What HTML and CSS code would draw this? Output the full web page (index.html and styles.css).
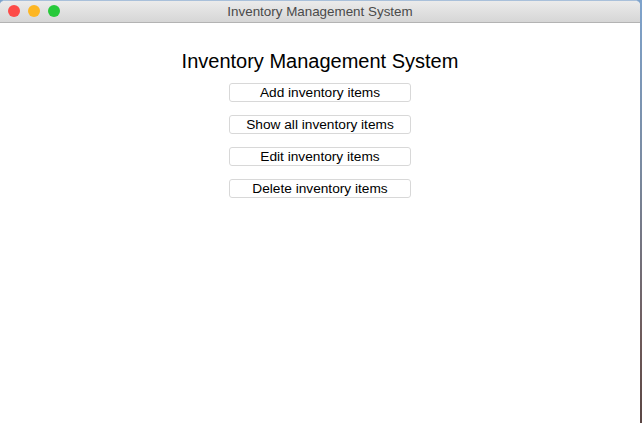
FILE: index.html
```html
<!DOCTYPE html>
<html>
<head>
<meta charset="utf-8">
<link rel="stylesheet" href="styles.css">
</head>
<body>
<div class="desktop">
  <div class="window">
    <div class="titlebar">
      <div class="lights">
        <span class="light red"></span>
        <span class="light yellow"></span>
        <span class="light green"></span>
      </div>
      <div class="wtitle">Inventory Management System</div>
    </div>
    <div class="content">
      <h1 class="heading">Inventory Management System</h1>
      <div class="buttons">
        <button class="btn">Add inventory items</button>
        <button class="btn">Show all inventory items</button>
        <button class="btn">Edit inventory items</button>
        <button class="btn">Delete inventory items</button>
      </div>
    </div>
  </div>
  <div class="edge"></div>
</div>
</body>
</html>
```
FILE: styles.css
```css
html, body {
  margin: 0;
  padding: 0;
  width: 642px;
  height: 423px;
  overflow: hidden;
  font-family: "Liberation Sans", Arial, sans-serif;
}
.desktop {
  display: flex;
  width: 642px;
  height: 423px;
  background: linear-gradient(180deg, #7ea3cc 0%, #7a8aa0 40%, #6e5a5a 80%, #5a4644 100%);
}
.window {
  width: 640px;
  height: 423px;
  display: flex;
  flex-direction: column;
  background: #ffffff;
  border-top-right-radius: 5px;
  border-top-left-radius: 5px;
  overflow: hidden;
  box-sizing: border-box;
  border-top: 1px solid #a9c0da;
}
.edge {
  flex: 1;
}
.titlebar {
  height: 21px;
  flex: none;
  position: relative;
  display: flex;
  align-items: center;
  justify-content: center;
  background: linear-gradient(180deg, #ebebeb 0%, #d6d6d6 100%);
  border-bottom: 1px solid #b3b3b3;
}
.lights {
  position: absolute;
  left: 8px;
  top: 4px;
  display: flex;
  gap: 8px;
}
.light {
  width: 12px;
  height: 12px;
  border-radius: 50%;
  display: block;
}
.red { background: #fd4b48; }
.yellow { background: #fdb623; }
.green { background: #27c93a; }
.wtitle {
  font-size: 13.4px;
  color: #4a4a4a;
}
.content {
  flex: 1;
  display: flex;
  flex-direction: column;
  align-items: center;
  padding-top: 26px;
}
.heading {
  margin: 0;
  font-size: 20px;
  font-weight: normal;
  color: #000;
  line-height: 24px;
}
.buttons {
  display: flex;
  flex-direction: column;
  gap: 13px;
  margin-top: 10px;
}
.btn {
  width: 182px;
  height: 19px;
  padding: 0;
  background: #ffffff;
  border: 1px solid #d8d8d8;
  border-radius: 3px;
  font-family: "Liberation Sans", Arial, sans-serif;
  font-size: 13.7px;
  color: #000;
  line-height: 17px;
}
```
